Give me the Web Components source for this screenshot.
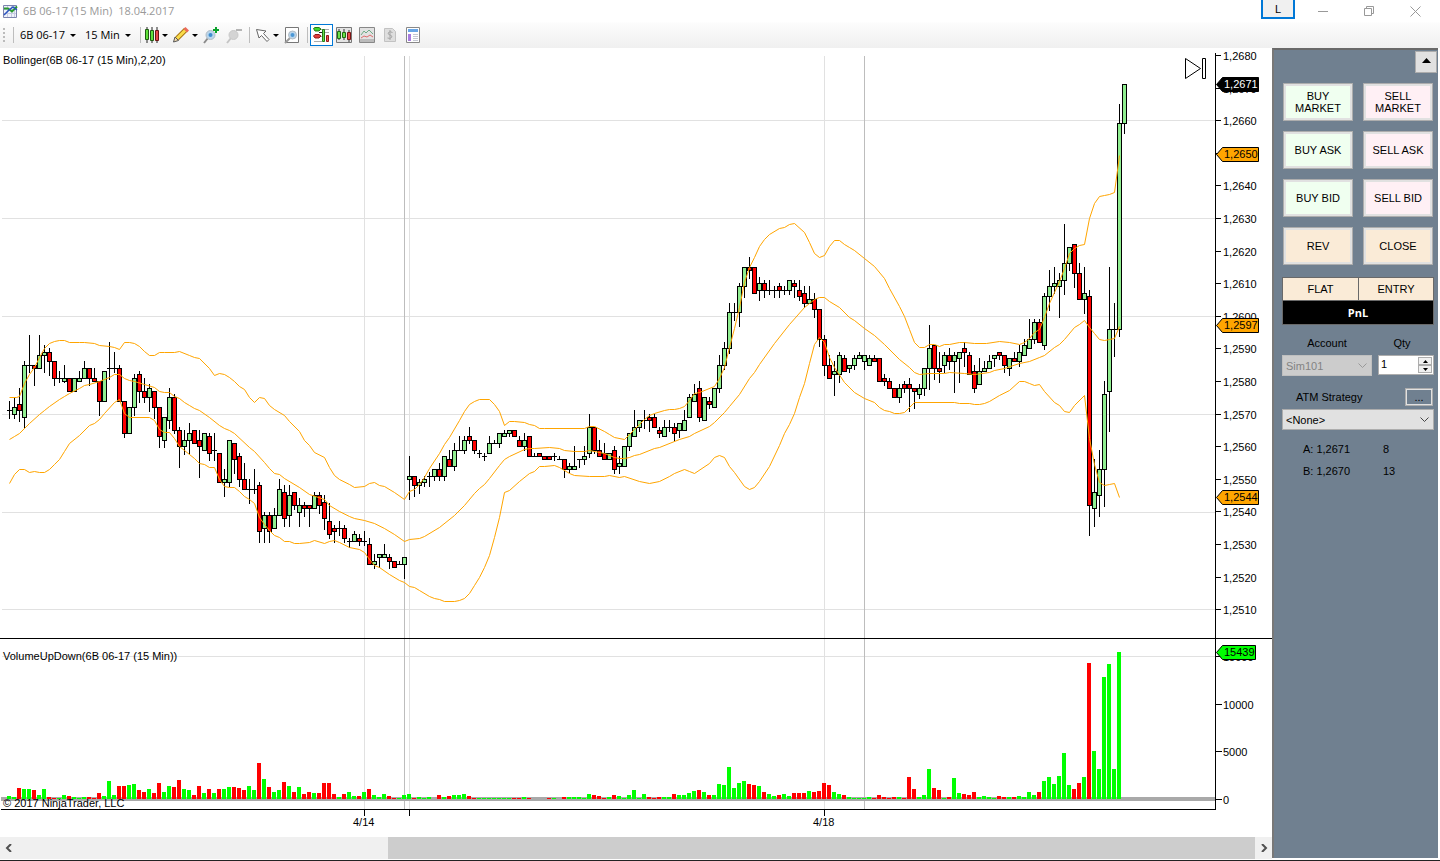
<!DOCTYPE html>
<html lang="en">
<head>
<meta charset="utf-8">
<title>6B 06-17 (15 Min) 18.04.2017</title>
<style>
  html, body { margin: 0; min-height: 100%; background: #fff; }
  body { font: 11px/12px "Liberation Sans", Arial, sans-serif; color: #000; }
</style>
</head>
<body>
<chart-window>
  <title-bar slot="title">
    <span>6B 06-17 (15 Min)</span>
    <span>18.04.2017</span>
  </title-bar>
  <tool-bar slot="tools"></tool-bar>
  <price-chart></price-chart>
  <volume-chart></volume-chart>
  <time-scroller></time-scroller>
  <order-panel slot="side"></order-panel>
</chart-window>

<script>
const define = (name, html, setup) => {
  const template = document.createElement("template");
  template.innerHTML = html;
  customElements.define(name, class extends HTMLElement {
    constructor() {
      super();
      this.attachShadow({ mode: "open" }).appendChild(template.content.cloneNode(true));
      if (setup) setup(this.shadowRoot);
    }
  });
};

// Each bar: high, body top, body bottom, low, signed volume (negative = down bar)
const bars = [
  [401,410,410,418,3],[397,407,414,418,2],[388,404,410,421,-11],[361,365,417,428,10],
  [335,365,365,372,10],[365,365,368,385,-9],[335,355,368,368,4],[345,352,355,372,10],
  [348,352,361,375,-2],[361,361,378,385,-1],[371,378,378,382,1],[365,378,381,382,4],
  [378,378,391,391,-3],[378,378,391,391,2],[371,378,381,381,1],[361,368,378,378,2],
  [368,368,378,385,-2],[368,378,381,381,-1],[381,381,401,415,-6],[371,371,401,401,3],
  [342,368,368,379,18],[352,368,368,372,4],[365,368,401,401,-13],[401,401,433,437,-13],
  [407,407,433,433,14],[374,378,407,415,15],[371,374,391,402,-9],[378,391,397,402,-7],
  [384,388,397,411,10],[391,391,407,418,-6],[407,407,436,447,-16],[417,417,440,447,7],
  [388,397,420,428,13],[394,397,430,433,-12],[427,430,446,467,-19],[430,440,446,454,10],
  [423,433,440,454,9],[430,430,443,443,-4],[430,440,446,477,-13],[433,433,450,450,6],
  [433,436,453,460,-10],[433,450,450,460,6],[453,453,482,482,-10],[469,479,482,496,10],
  [440,440,482,486,12],[443,443,459,473,-12],[453,456,479,486,-11],[463,479,489,489,-9],
  [479,489,489,503,13],[469,489,489,493,9],[482,485,531,542,-36],[512,515,528,542,20],
  [512,515,531,542,-12],[508,515,528,528,7],[479,489,515,515,9],[485,492,518,526,-17],
  [485,495,515,526,13],[492,492,505,509,-7],[498,505,512,526,12],[502,505,508,516,-5],
  [505,505,508,526,-7],[492,495,508,508,6],[492,495,505,513,-6],[495,502,518,529,-16],
  [503,521,534,538,-16],[525,528,531,542,-5],[521,528,528,535,2],[525,528,538,542,-5],
  [538,541,541,547,7],[531,534,541,541,3],[534,538,541,545,-3],[531,541,541,545,7],
  [538,544,564,564,-10],[554,561,564,568,4],[554,554,557,567,2],[544,554,557,557,5],
  [554,557,561,568,-3],[561,561,567,567,-1],[561,564,564,564,1],[557,557,564,578,4],
  [456,476,479,499,5],[476,476,485,496,-1],[479,482,485,493,2],[476,479,482,486,1],
  [472,476,476,486,2],[469,469,476,480,0],[463,469,476,480,-4],[456,456,476,480,2],
  [450,459,466,466,-3],[443,450,466,470,4],[436,450,450,450,4],[436,440,450,453,5],
  [427,436,440,443,-3],[440,440,450,453,-1],[450,453,453,457,1],[453,456,456,460,1],
  [436,443,453,453,1],[440,443,443,443,1],[433,433,443,447,1],[430,433,436,436,1],
  [430,430,433,436,1],[430,430,436,436,-1],[436,440,446,446,-1],[433,440,446,450,2],
  [436,436,456,456,-1],[453,456,456,456,0],[453,453,456,456,-.1],[456,456,459,459,-.1],
  [456,456,459,459,-1],[453,456,456,460,1],[456,459,459,459,0],[459,459,469,477,-2],
  [463,466,469,472,2],[446,466,469,469,2],[459,459,459,467,2],[446,456,459,464,1],
  [414,427,453,457,5],[427,427,450,453,-4],[440,450,456,456,-3],[443,453,459,459,-1],
  [453,453,459,459,2],[446,450,469,473,-4],[456,463,466,473,3],[446,446,466,466,1],
  [433,433,446,450,4],[410,427,436,436,9],[420,420,427,431,1],[410,420,420,428,5],
  [414,417,420,431,-2],[414,417,427,427,-1],[427,430,433,437,-2],[420,427,436,436,2],
  [420,427,427,431,2],[423,427,433,440,-5],[423,423,430,437,4],[410,420,430,430,4],
  [394,397,417,417,6],[384,394,401,401,8],[381,388,417,421,-9],[397,397,420,420,7],
  [397,401,404,408,-4],[388,388,407,407,4],[355,365,388,392,15],[342,348,365,369,14],
  [303,312,348,353,32],[303,312,312,320,11],[283,286,312,326,16],[267,267,286,297,18],
  [257,267,270,278,-15],[267,267,293,293,-14],[277,283,290,300,13],[280,283,290,297,-7],
  [280,290,290,294,5],[286,290,290,297,3],[283,286,290,297,-4],[286,290,290,294,5],
  [280,280,290,294,3],[280,283,286,297,-6],[280,290,296,300,-6],[286,293,303,307,-6],
  [286,299,303,303,8],[293,299,309,317,-7],[309,309,339,346,-8],[335,339,365,375,-16],
  [355,365,378,378,-14],[361,371,374,395,7],[352,355,374,382,5],[355,358,371,371,-4],
  [365,365,368,372,2],[355,358,365,369,1],[352,355,358,358,1],[355,355,361,369,1],
  [355,358,365,365,2],[355,358,361,361,-1],[358,358,381,381,-4],[374,378,381,385,-2],
  [378,381,388,388,-1],[388,388,397,397,-2],[384,388,397,402,2],[381,384,388,392,-1],
  [378,384,388,411,-22],[388,388,391,408,-10],[384,388,394,398,2],[368,368,388,395,4],
  [325,348,368,389,30],[345,345,368,379,-11],[352,368,371,382,-9],[352,355,365,372,1],
  [348,355,361,369,-2],[352,355,361,392,21],[352,352,358,382,6],[342,348,352,366,-5],
  [352,355,374,374,-4],[365,371,388,392,-7],[358,371,384,384,2],[361,368,371,371,3],
  [355,361,368,368,2],[355,355,358,366,1],[352,352,355,359,-3],[355,355,365,372,-2],
  [358,358,368,375,2],[352,358,361,361,-2],[345,352,361,366,3],[339,345,355,355,2],
  [319,339,348,348,7],[319,322,339,343,4],[319,322,342,342,-7],[293,296,345,349,18],
  [270,286,296,310,22],[267,283,286,293,15],[273,280,286,317,23],[224,263,280,294,46],
  [247,247,263,270,14],[244,244,273,287,-10],[263,273,299,299,-16],[267,293,299,313,22],
  [290,296,505,535,-136],[459,492,508,526,48],[450,469,495,516,30],[381,394,469,506,122],
  [267,329,391,431,135],[303,329,329,356,30],[104,123,329,336,147],[84,84,123,133,0]
];

const bands = [
  // upper
  "9,397 16,397 19,396 24,383 29,374 34,367 39,357 44,348 49,343 54,341 59,340 64,340 69,342 79,342 84,342 94,343 99,345 109,346 114,347 119,349 124,342 129,342 134,343 139,346 144,351 149,355 154,355 159,352 164,352 174,352 179,351 189,355 194,357 199,358 209,368 214,375 219,373 224,374 229,377 234,381 239,386 244,389 249,397 254,402 259,397 264,398 269,405 274,409 284,415 289,421 299,431 304,440 309,445 314,452 324,457 329,467 334,475 339,479 349,484 354,487 364,486 369,483 374,482 379,485 384,486 394,492 404,499 409,491 414,489 419,484 424,477 429,468 439,453 444,444 449,437 459,420 464,411 469,404 474,401 479,399 489,399 494,404 499,411 504,425 509,421 514,421 524,422 529,424 534,425 539,428 544,428 584,428 589,426 594,426 604,431 609,434 614,437 624,439 629,434 634,429 639,424 644,419 649,415 654,413 664,410 669,409 674,409 679,408 684,406 689,400 694,393 699,392 714,386 719,378 724,367 729,347 734,328 739,307 744,282 749,267 754,257 759,246 764,239 769,234 779,228 784,227 789,224 794,223 804,232 809,242 814,253 819,257 824,255 829,246 834,240 839,240 844,244 849,247 854,250 864,258 874,266 884,278 889,288 899,306 904,316 909,329 914,342 919,347 924,347 929,344 934,344 939,346 944,344 949,344 959,342 964,342 974,343 986,343 999,341 1009,342 1019,344 1024,342 1029,338 1034,332 1039,329 1044,317 1049,303 1054,292 1059,281 1064,268 1069,253 1074,248 1079,245 1084,244 1089,218 1094,203 1099,196 1104,195 1109,194 1114,192 1119,155",
  // middle
  "9,439 14,436 19,433 29,423 39,414 44,410 49,406 59,399 64,396 69,393 79,388 84,385 89,384 99,381 109,377 114,374 119,374 124,378 129,380 134,381 144,384 154,387 159,391 164,392 169,392 174,396 179,398 184,402 189,405 194,408 199,410 209,417 219,425 224,428 229,430 234,433 249,447 254,451 264,462 269,468 274,473 279,474 284,478 299,487 309,494 324,499 329,505 339,511 349,516 354,518 364,520 374,523 384,528 394,534 404,541 409,539 419,538 424,536 439,527 454,515 464,505 474,493 479,488 484,484 489,478 499,465 504,459 509,456 524,449 529,448 534,448 549,447 559,448 564,450 574,451 584,451 589,450 604,453 614,457 619,458 624,458 629,457 634,455 639,454 654,448 659,447 679,439 689,436 694,433 709,426 714,422 724,412 729,406 739,394 749,378 754,372 759,364 774,343 789,324 804,307 809,303 814,299 819,297 824,297 829,301 839,307 849,317 854,320 864,328 874,335 884,344 899,359 909,367 914,372 919,374 929,373 944,373 949,372 964,373 974,374 989,372 994,370 1004,368 1019,363 1029,361 1039,357 1044,355 1054,347 1059,344 1064,339 1074,327 1079,324 1084,320 1089,327 1094,333 1099,339 1104,340 1109,339 1114,338 1119,326",
  // lower
  "9,483 14,474 19,469 24,469 29,472 34,471 39,472 44,472 49,469 54,464 59,459 64,451 69,443 79,435 89,425 94,423 99,419 104,413 114,402 119,399 124,413 129,417 149,417 154,420 159,429 164,432 169,432 174,438 179,446 184,450 194,458 199,463 204,464 209,467 214,467 219,479 224,486 229,487 234,487 239,491 244,496 249,499 254,503 259,517 264,524 269,530 274,535 279,537 284,541 289,541 294,543 299,543 309,542 314,540 324,543 329,541 334,540 339,542 349,547 359,549 364,552 369,559 374,565 379,567 389,574 399,580 404,582 409,586 414,587 419,590 429,596 434,598 439,599 444,601 454,601 459,600 464,598 469,593 474,585 479,577 484,567 489,555 494,537 499,517 504,492 509,490 519,481 529,473 534,471 539,466 544,466 554,465 559,467 569,473 574,475 589,476 604,476 609,475 619,477 624,476 639,481 649,483 659,481 669,476 674,473 684,469 689,471 694,473 709,463 714,457 719,455 724,457 729,466 734,472 744,486 749,489 754,487 759,481 769,466 779,445 784,433 789,424 794,413 799,397 804,383 809,363 814,344 819,337 824,342 829,357 834,367 844,382 854,392 864,398 874,402 879,407 884,410 889,411 894,413 899,413 904,412 914,402 954,402 959,403 969,403 974,404 979,404 984,403 989,401 999,395 1009,390 1019,381 1024,381 1029,383 1034,385 1039,384 1044,391 1054,402 1059,405 1064,411 1069,412 1074,405 1084,395 1089,438 1094,464 1099,482 1104,485 1109,484 1114,483 1119,497"
];

const barX = (i) => 9 + i * 5;
const rect = (x, y, w, h, fill) => `<rect x="${x}" y="${y}" width="${w}" height="${h}" fill="${fill}"/>`;
const label = (x, y, text, fill = "#000") => `<text x="${x}" y="${y}" fill="${fill}">${text}</text>`;
const flag = (y, text, fill, color, right = 1258) =>
  `<path d="M1216.5 ${y + .5}l6-7H${right + .5}v14H1222.5z" fill="${fill}" stroke="#000" shape-rendering="auto"/>` +
  label(1224, y + 4, text, color);

const sessions = (top, bottom) =>
  [364, 409, 824].map((x) => rect(x, top, 1, bottom - top, "#e1e1e1")).join("") +
  [404, 864].map((x) => rect(x, top, 1, bottom - top, "#bdbdbd")).join("");

const chartStyle = `<style>
  :host { display: block; }
  svg { display: block; width: 100%; height: auto; shape-rendering: crispEdges;
        font: 11px "Liberation Sans", Arial, sans-serif; }
</style>`;

const priceMarkup = () => {
  let out = [120, 218, 316, 414, 512, 609].map((y) => rect(2, y, 1213, 1, "#e1e1e1")).join("");
  out += sessions(56, 638);
  bars.forEach(([high, top, bottom, low, volume], i) => {
    const x = barX(i);
    out += rect(x, high, 1, low - high + 1, "#000");
    out += rect(x - 2, top, 5, bottom - top + 1, "#000");
    if (bottom - top > 1) {
      out += rect(x - 1, top + 1, 3, bottom - top - 1, volume < 0 ? "#f00" : "#90ee90");
    }
  });
  out += `<g transform="translate(.5 .5)" fill="none" stroke="#ffa500" shape-rendering="auto">` +
    bands.map((points) => `<polyline points="${points}"/>`).join("") + `</g>`;
  out += rect(1215, 53, 1, 585, "#000") + rect(0, 638, 1272, 1, "#000");
  for (let price = 2680; price >= 2510; price -= 10) {
    const y = Math.round(55 + (2680 - price) * 3.26);
    out += rect(1216, y, 5, 1, "#000") + label(1223, y + 5, "1," + price);
  }
  out += flag(84, "1,2671", "#000", "#fff");
  out += flag(154, "1,2650", "#ffa500") + flag(325, "1,2597", "#ffa500") + flag(497, "1,2544", "#ffa500");
  out += label(3, 64, "Bollinger(6B 06-17 (15 Min),2,20)");
  out += `<path d="M1185.5 58.5v20l15-10zM1202.5 58.5h3v20h-3z" fill="none" stroke="#000" shape-rendering="auto"/>`;
  return out;
};

const volumeMarkup = () => {
  let out = rect(2, 656, 1213, 1, "#e1e1e1") + sessions(639, 809);
  out += rect(1, 797, 1214, 4, "#a9a9a9");
  bars.forEach(([, , , , volume], i) => {
    const height = Math.round(Math.abs(volume));
    if (height) out += rect(barX(i) - 2, 799 - height, 4, height, volume < 0 ? "#f00" : "#0f0");
  });
  out += rect(1215, 639, 1, 171, "#000") + rect(1, 809, 1215, 1, "#000");
  out += [364, 409, 824].map((x) => rect(x, 810, 1, 6, "#000")).join("");
  out += label(353, 826, "4/14") + label(813, 826, "4/18");
  [[656, 15000], [704, 10000], [751, 5000], [799, 0]].forEach(([y, value]) => {
    out += rect(1216, y, 6, 1, "#000") + label(1223, y + 5, value);
  });
  out += flag(652, "15439", "#0f0", "#000", 1255);
  out += label(3, 660, "VolumeUpDown(6B 06-17 (15 Min))") + label(3, 807, "© 2017 NinjaTrader, LLC");
  return out;
};

define("price-chart", `${chartStyle}<svg viewBox="0 48 1272 591" role="img" aria-label="Price">${priceMarkup()}</svg>`);
define("volume-chart", `${chartStyle}<svg viewBox="0 639 1272 198" role="img" aria-label="Volume">${volumeMarkup()}</svg>`);

define("chart-window", `<style>
  :host { display: flex; flex-direction: column; min-height: 100vh; }
  .body { display: flex; flex: 1; }
  main { flex: 1; min-width: 0; display: flex; flex-direction: column; }
  .side { display: flex; flex: none; }
  footer { height: 1px; background: #222; }
</style>
<slot name="title"></slot>
<slot name="tools"></slot>
<div class="body">
  <main><slot></slot></main>
  <div class="side"><slot name="side"></slot></div>
</div>
<footer></footer>`);

define("title-bar", `<style>
  :host { display: flex; align-items: center; height: 22px; padding-right: 2px; color: #999;
          font: 11px/16px "Open Sans", "Noto Sans", sans-serif; background: #fff; }
  .app { margin: 0 5px 0 3px; }
  .name { display: flex; gap: 6px; flex: 1; align-items: center; }
  button { border: 0; padding: 0; background: none; height: 20px; width: 46px; display: grid; place-items: center; }
  .link { width: 34px; height: 19px; margin-right: 5px; align-self: flex-start; background: #f0f0f0; color: #000;
          border: 2px solid #0078d7; border-top-width: 0; font: 11px/16px "Liberation Sans", Arial, sans-serif; }
</style>
<svg class="app" width="15" height="15" viewBox="0 0 15 15">
  <path d="M.5 1.5h13v12H.5z" fill="#eef1fa" stroke="#7d84ae"/>
  <path d="M1 5.500h12M1 9.500h12M4.500 2v11M8.500 2v11M11.500 2v11" stroke="#c6cbe2"/>
  <path d="M1 4.500h4l4 3 5-5" fill="none" stroke="#2a9a30" stroke-width="2"/>
  <path d="M1 11l5-5 4-3 4 3" fill="none" stroke="#2b55c0" stroke-width="1.500"/>
</svg>
<div class="name"><slot></slot></div>
<button class="link">L</button>
<button aria-label="Minimize"><svg width="10" height="10"><path d="M0 5.500h10" stroke="#999"/></svg></button>
<button aria-label="Restore"><svg width="11" height="11" fill="none" stroke="#999"><path d="M.5 2.500h7v7h-7zM2.500 2.500v-2h7v7h-2"/></svg></button>
<button aria-label="Close"><svg width="11" height="11" stroke="#999"><path d="M.5.5l10 10M10.500.5l-10 10"/></svg></button>`);

define("tool-bar", `<style>
  :host { display: flex; align-items: center; height: 26px;
          background: linear-gradient(#fff, #fcfcfc 1px, #f0f0f0); }
  button { display: flex; align-items: center; border: 0; padding: 0; margin: 0; background: none; color: #000;
           height: 22px; font: 11px/16px "Open Sans", "Noto Sans", sans-serif; }
  svg { display: block; overflow: visible; }
  .grip { width: 2px; height: 14px; margin: 0 8px 0 3px; background: repeating-linear-gradient(#bbb 0 2px, transparent 2px 4px); }
  .sep { width: 1px; height: 16px; margin: 0 6px 0 0; background: #bdbdbd; }
  .menu::after { content: ""; border: 3px solid transparent; border-top-color: #000; border-bottom: 0; margin: 0 9px 0 5px; }
  .tight::after { margin: 0 5px 0 2px; }
  .tool { margin-right: 7px; }
  .on { margin: 0 3px 0 -4px; box-sizing: border-box; width: 23px; padding: 0 2px; border: 1px solid #0078d7; background: #fff; }
</style>
<span class="grip"></span><span class="sep"></span>
<button class="menu">6B 06-17</button>
<button class="menu">15 Min</button>
<span class="sep" style="margin-right:3px"></span>
<button class="menu tight" aria-label="Chart style"><svg width="16" height="16">
  <path d="M3 0v16M8 0v16M13 0v16" stroke="#222"/>
  <path d="M1.500 2.500h3v10h-3zM6.500 3.500h3v10h-3z" fill="#5fe03a" stroke="#1e5b12"/><path d="M11.500 3.500h3v10h-3z" fill="#e84a4a" stroke="#6c1212"/>
</svg></button>
<button class="menu tight" aria-label="Drawing tools"><svg width="17" height="16">
  <path d="M4 11.500L13 2.500" stroke="#a87412" stroke-width="5"/><path d="M3.500 12L12.500 3" stroke="#f9dc4a" stroke-width="3"/>
  <path d="M10.500 2l2-2 3.500 3.500-2 2z" fill="#ec6a5c"/><path d="M2 10l3.500 3.500L.5 15z" fill="#f4dcae" stroke="#555"/>
</svg></button>
<button class="tool" aria-label="Zoom in"><svg width="16" height="16">
  <path d="M5 11l-4 5" stroke="#8a8a8a" stroke-width="2"/><circle cx="7.500" cy="8" r="4.500" fill="#b9d5ec" stroke="#b3bcc3"/><circle cx="7.500" cy="8" r="2" fill="#3e8ed0"/>
  <path d="M13 0v6M10 3h6" stroke="#0aa22b" stroke-width="2"/>
</svg></button>
<button class="tool" aria-label="Zoom out" disabled><svg width="16" height="16">
  <path d="M5 11l-4 5" stroke="#c4c4c4" stroke-width="2"/><circle cx="7.500" cy="8" r="4.500" fill="#d4d4d4" stroke="#c9c9c9"/>
  <path d="M10 3h6" stroke="#b5b5b5" stroke-width="2"/>
</svg></button>
<span class="sep"></span>
<button class="menu tight" aria-label="Cursor"><svg width="15" height="16">
  <path d="M.5 2.500l9.500 1.500-2.500 2.500 5.500 6-2 2-5.500-6-2.500 2.500z" fill="#fff" stroke="#666"/>
</svg></button>
<button class="tool" aria-label="Zoom frame"><svg width="16" height="16">
  <path d="M1.500.5h13v15h-13z" fill="#fff" stroke="#777"/>
  <path d="M6 11l-5 5" stroke="#999" stroke-width="2"/><circle cx="8.500" cy="8" r="4" fill="#b9d5ec" stroke="#b3bcc3"/><circle cx="8.500" cy="8" r="2" fill="#4b98d6"/>
</svg></button>
<span class="sep"></span>
<button class="on" aria-label="Chart trader"><svg width="17" height="18">
  <path d="M6 3.500h10M6 6.500h4M6 10.500h4M1 15.500h8M12 6.500h4" stroke="#aaa"/>
  <path d="M.5 2.500l1.500-1h4l2 1.500-2 2H2z" fill="#42d52b" stroke="#247a18"/><path d="M.5 10l1.500-1.500h4L8 10l-2 2H2z" fill="#e23b3b" stroke="#951818"/>
  <path d="M6 6.500h4" stroke="#222"/>
  <path d="M9.500 3.500h2v12h-2z" fill="#6be04a" stroke="#247a18"/><path d="M13.500 9.500h2v6h-2z" fill="#ef5555" stroke="#951818"/>
</svg></button>
<button class="tool" aria-label="Data series"><svg width="16" height="16">
  <path d="M.5.5h15v15H.5z" fill="#e4e4e4" stroke="#777"/><path d="M3 2v11M8 2v11M13 3v12" stroke="#333"/>
  <path d="M1.500 4.500h3v7h-3z" fill="#6be04a" stroke="#1e6b12"/><path d="M6.500 5.500h3v5h-3z" fill="#6be04a" stroke="#1e6b12"/><path d="M11.500 5.500h3v7h-3z" fill="#e84a4a" stroke="#7c1212"/>
</svg></button>
<button class="tool" aria-label="Indicators"><svg width="16" height="16">
  <path d="M.5.5h15v15H.5z" fill="#e2e2e2" stroke="#888"/><path d="M1 12h14v3H1z" fill="#bbb"/>
  <path d="M2 8l3-4 2 2 3-3 4 4" fill="none" stroke="#6faa85"/><path d="M2 11l3-2 3 1 3-2 3 2" fill="none" stroke="#df6c6c"/>
</svg></button>
<button class="tool" aria-label="Strategies" disabled><svg width="16" height="16">
  <path d="M2.500 1.500h8l3 3v10h-11z" fill="#dedede" stroke="#c2c2c2"/><path d="M10.500 5.500Q8 4 6.500 5.500T8 8t1.500 2.500-4 .5M8 3v10" fill="none" stroke="#a5a5a5"/>
</svg></button>
<button class="tool" aria-label="Properties"><svg width="16" height="16">
  <path d="M1.500.5h13v15h-13z" fill="#fff" stroke="#888"/><path d="M3 2h10v3H3z" fill="#68a6e6"/><path d="M3 7h3v7H3z" fill="#a77be0"/>
  <path d="M8 7.500h5M8 9.500h5M8 11.500h5M8 13.500h5" stroke="#c4c8d2"/>
</svg></button>`);

define("time-scroller", `<style>
  :host { display: flex; height: 22px; background: #f0f0f0; }
  button { width: 17px; border: 0; padding: 0; background: none; display: grid; place-items: center; }
  .track { flex: 1; display: flex; justify-content: flex-end; }
  .thumb { width: 70%; background: #cdcdcd; }
  path { fill: none; stroke: #505050; stroke-width: 2; }
</style>
<button aria-label="Scroll left"><svg width="8" height="8"><path d="M6 0L2 4l4 4"/></svg></button>
<div class="track"><div class="thumb"></div></div>
<button aria-label="Scroll right"><svg width="8" height="8"><path d="M2 0l4 4-4 4"/></svg></button>`);

define("order-button", `<style>
  :host { display: block; }
  button { display: block; box-sizing: border-box; width: 100%; height: 38px; padding: 0 8px; color: #000;
           border: 1px solid #adadad; box-shadow: inset 0 0 0 2px #e1e1e1;
           background: var(--tone, #faebd7); font: 11px/12px "Liberation Sans", Arial, sans-serif; }
</style>
<button><slot></slot></button>`);

define("order-panel", `<style>
  :host { display: block; box-sizing: border-box; width: 166px; margin: 0 2px 2px 0; background: #708090;
          border: 0 solid #696969; border-width: 2px 0 0 2px; border-left-color: #787878; }
  button, input, select { font: 11px/12px "Liberation Sans", Arial, sans-serif; color: #000;
          box-sizing: border-box; margin: 0; border-radius: 0; }
  header { display: flex; justify-content: flex-end; padding: 1px 1px 0; }
  header button { width: 22px; height: 22px; padding: 0 0 4px; border: 1px solid #adadad; background: #e1e1e1;
          display: grid; place-items: center; }
  .content { padding: 10px 4px 0 8px; }
  .orders { display: grid; grid-template-columns: 1fr 1fr; gap: 10px; padding: 0 1px; }
  .buy { --tone: #f0fff0; } .sell { --tone: #fff0f5; }
  .position { display: grid; grid-template-columns: 1fr 1fr; margin-top: 12px; border: 1px solid #696969; }
  .position div { height: 22px; line-height: 22px; text-align: center; background: #faebd7; }
  .position div + div { border-left: 1px solid #696969; }
  .position .pnl { grid-column: 1 / 3; height: 23px; border: 0; border-top: 1px solid #696969; background: #000; color: #fff;
          font: bold 11px/23px "Open Sans", "Noto Sans", sans-serif; }
  .row { display: grid; grid-template-columns: 90px 56px; gap: 6px; }
  .captions { grid-template-columns: 90px 48px; margin-top: 12px; height: 18px; text-align: center; }
  select { display: block; width: 100%; height: 21px; appearance: none; padding: 0 3px; border: 1px solid #adadad; opacity: 1;
          background: #e1e1e1 url("data:image/svg+xml,%3Csvg xmlns='http://www.w3.org/2000/svg' width='9' height='6'%3E%3Cpath d='M.5.5l4 4 4-4' fill='none' stroke='%23444'/%3E%3C/svg%3E") no-repeat right 4px center; }
  select:disabled { color: #838383; background-color: #ccc; border-color: #bfbfbf;
          background-image: url("data:image/svg+xml,%3Csvg xmlns='http://www.w3.org/2000/svg' width='9' height='6'%3E%3Cpath d='M.5.5l4 4 4-4' fill='none' stroke='%23999'/%3E%3C/svg%3E"); }
  .spin { display: grid; grid-template: 1fr 1fr / 1fr 14px; height: 20px; box-sizing: border-box; padding: 1px; background: #fff; border: 1px solid #adadad; }
  .spin input { grid-row: 1 / 3; width: 100%; min-width: 0; border: 0; padding: 0 1px 3px; outline: 0; appearance: textfield; }
  .spin button { padding: 0; border: 1px solid #adadad; background: #f0f0f0; display: grid; place-items: center; }
  .atm { display: flex; justify-content: space-between; align-items: center; margin: 12px 1px 3px 14px; height: 18px; }
  .atm button { width: 28px; height: 18px; padding: 0; background: #708090; border: 1px solid #adadad; box-shadow: inset 0 0 0 1px #e1e1e1; }
  dl { display: grid; grid-template-columns: 80px 1fr; margin: 8px 0 0 21px; line-height: 22px; }
  dd { margin: 0; }
  svg { display: block; }
</style>
<header><button aria-label="Collapse"><svg width="9" height="5"><path d="M0 5l4.500-5L9 5z"/></svg></button></header>
<div class="content">
  <div class="orders">
    <order-button class="buy">BUY MARKET</order-button><order-button class="sell">SELL MARKET</order-button>
    <order-button class="buy">BUY ASK</order-button><order-button class="sell">SELL ASK</order-button>
    <order-button class="buy">BUY BID</order-button><order-button class="sell">SELL BID</order-button>
    <order-button>REV</order-button><order-button>CLOSE</order-button>
  </div>
  <div class="position"><div>FLAT</div><div>ENTRY</div><div class="pnl">PnL</div></div>
  <div class="row captions"><label for="account">Account</label><label for="qty">Qty</label></div>
  <div class="row">
    <select id="account" disabled><option>Sim101</option></select>
    <div class="spin">
      <input id="qty" type="number" value="1" min="1">
      <button class="up" aria-label="More"><svg width="5" height="3"><path d="M0 3l2.500-3L5 3z"/></svg></button>
      <button class="down" aria-label="Less"><svg width="5" height="3"><path d="M0 0l2.500 3L5 0z"/></svg></button>
    </div>
  </div>
  <div class="atm"><label for="atm">ATM Strategy</label><button aria-label="Strategy options">...</button></div>
  <select id="atm"><option>&lt;None&gt;</option></select>
  <dl><dt>A: 1,2671</dt><dd>8</dd><dt>B: 1,2670</dt><dd>13</dd></dl>
</div>`, (root) => {
  const qty = root.getElementById("qty");
  root.querySelector(".up").addEventListener("click", () => qty.stepUp());
  root.querySelector(".down").addEventListener("click", () => qty.stepDown());
});
</script>
</body>
</html>
